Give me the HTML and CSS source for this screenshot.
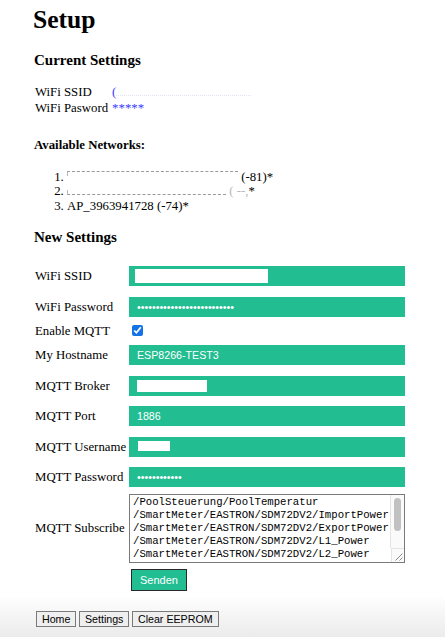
FILE: index.html
```html
<!DOCTYPE html>
<html lang="de">
<head>
<meta charset="utf-8">
<title>Setup</title>
<link rel="stylesheet" href="styles.css">
</head>
<body>
<main class="page">
  <h1 class="title">Setup</h1>
  <h3 class="section">Current Settings</h3>
  <table class="current">
    <tr><td class="k">WiFi SSID</td><td class="v"><span class="blue">(</span><span class="redact-dots"></span></td></tr>
    <tr><td class="k">WiFi Pasword</td><td class="v blue">*****</td></tr>
  </table>
  <h4 class="sub">Available Networks:</h4>
  <ol class="networks">
    <li><span class="redact redact-top"></span> (-81)*</li>
    <li><span class="redact redact-bottom"></span><span class="faint"> ( --,</span>*</li>
    <li>AP_3963941728 (-74)*</li>
  </ol>
  <h3 class="section section-new">New Settings</h3>
  <form class="settings" onsubmit="return false">
    <label class="lbl" for="ssid">WiFi SSID</label>
    <input class="field mask-ssid" id="ssid" type="text" value="">
    <label class="lbl" for="pw">WiFi Password</label>
    <input class="field" id="pw" type="password" value="abcdefghijklmnopqrstuvwxyz">
    <label class="lbl lbl-check" for="mqtt">Enable MQTT</label>
    <div class="check-cell"><input class="check" id="mqtt" type="checkbox" checked></div>
    <label class="lbl" for="host">My Hostname</label>
    <input class="field" id="host" type="text" value="ESP8266-TEST3">
    <label class="lbl" for="broker">MQTT Broker</label>
    <input class="field mask-broker" id="broker" type="text" value="">
    <label class="lbl" for="port">MQTT Port</label>
    <input class="field" id="port" type="text" value="1886">
    <label class="lbl" for="user">MQTT Username</label>
    <input class="field mask-user" id="user" type="text" value="">
    <label class="lbl" for="mpw">MQTT Password</label>
    <input class="field" id="mpw" type="password" value="abcdefghijkl">
    <label class="lbl lbl-area" for="sub">MQTT Subscribe</label>
    <div class="area-wrap">
      <textarea class="area" id="sub" spellcheck="false">/PoolSteuerung/PoolTemperatur
/SmartMeter/EASTRON/SDM72DV2/ImportPower
/SmartMeter/EASTRON/SDM72DV2/ExportPower
/SmartMeter/EASTRON/SDM72DV2/L1_Power
/SmartMeter/EASTRON/SDM72DV2/L2_Power
/SmartMeter/EASTRON/SDM72DV2/L3_Power
/SmartMeter/EASTRON/SDM72DV2/TotalPower</textarea>
      <div class="sb-track"><div class="sb-thumb"></div></div>
      <div class="sb-corner">
        <svg width="12" height="13" viewBox="0 0 12 13"><path d="M10.5 4.5 L3.5 11.5 M10.5 8.5 L7.5 11.5" stroke="#8a8a8a" stroke-width="1" fill="none"/></svg>
      </div>
    </div>
    <span class="spacer"></span>
    <div class="submit-cell"><button class="send" type="submit">Senden</button></div>
  </form>
</main>
<footer class="nav">
  <button class="navbtn" type="button">Home</button>
  <button class="navbtn" type="button">Settings</button>
  <button class="navbtn" type="button">Clear EEPROM</button>
</footer>
</body>
</html>
```

FILE: styles.css
```css
html, body {
  margin: 0;
  padding: 0;
}

body {
  display: flex;
  flex-direction: column;
  min-height: 100vh;
  font-family: "Liberation Serif", "Times New Roman", serif;
  font-size: 12.8px;
  color: #000;
  background: #fff;
}

.page {
  padding: 0 40px 0 35px;
}

.title {
  font-size: 25.6px;
  line-height: 29px;
  font-weight: bold;
  margin: 5px 0 0 -2px;
}

.section {
  font-size: 15px;
  line-height: 17px;
  font-weight: bold;
  margin: 18px 0 0 -1px;
}

.current {
  border-collapse: collapse;
  margin-top: 14.5px;
  line-height: 16.5px;
}

.current td {
  padding: 0;
  vertical-align: baseline;
}

.current .k {
  padding-right: 4px;
}

.blue {
  color: #3a3aff;
}

.redact-dots {
  display: inline-block;
  width: 135px;
  height: 9px;
  border-bottom: 1px dotted #e2e2f4;
}

.sub {
  font-size: 12.8px;
  line-height: 15px;
  font-weight: bold;
  margin: 21px 0 0 -1px;
}

.networks {
  margin: 17px 0 0;
  padding-left: 32px;
  line-height: 14.7px;
}

.redact {
  display: inline-block;
  width: 170px;
  height: 9px;
}

.redact-top {
  border-top: 1px dashed #9a9a9a;
  border-left: 1px solid #b8b8b8;
  height: 4px;
  vertical-align: 5px;
}

.redact-bottom {
  width: 158px;
  height: 4px;
  border-bottom: 1px dashed #9a9a9a;
  border-left: 1px solid #b8b8b8;
}

.faint {
  color: #b8b8b8;
}

.section-new {
  margin-top: 15px;
}

.settings {
  display: grid;
  grid-template-columns: 94px 276px;
  align-items: center;
  margin-top: 15.5px;
}

.lbl {
  line-height: 14.7px;
  white-space: nowrap;
}

.field {
  box-sizing: border-box;
  width: 276px;
  height: 20px;
  margin: 5px 0 5.5px;
  padding: 0 8px;
  border: none;
  outline: none;
  background: #23bd92;
  color: #fff;
  font-family: "Liberation Sans", Arial, sans-serif;
  font-size: 10.67px;
}

.mask-ssid {
  background: linear-gradient(#fff, #fff) no-repeat 6px 3px / 133px 14px, #23bd92;
}

.mask-broker {
  background: linear-gradient(#fff, #fff) no-repeat 8px 4px / 70px 12px, #23bd92;
}

.mask-user {
  background: linear-gradient(#fff, #fff) no-repeat 9px 4px / 32px 10px, #23bd92;
}

.check-cell {
  height: 18px;
  display: flex;
  align-items: center;
}

.check {
  width: 11px;
  height: 11px;
  margin: 0 0 2px 3px;
  accent-color: #1473e6;
}

.area-wrap {
  position: relative;
  width: 276px;
  height: 69px;
  margin-top: 1.5px;
}

.area {
  display: block;
  box-sizing: border-box;
  width: 276px;
  height: 69px;
  margin: 0;
  padding: 1px 16px 1px 3px;
  border: 1px solid #7a7a7a;
  font-family: "Liberation Mono", "Courier New", monospace;
  font-size: 10.67px;
  line-height: 13px;
  color: #000;
  background: #fff;
  white-space: pre;
  overflow: hidden;
  resize: none;
  outline: none;
}

.sb-track {
  position: absolute;
  top: 1px;
  right: 1px;
  width: 13px;
  height: 53px;
  background: #fafafa;
  border-left: 1px solid #e4e4e4;
}

.sb-thumb {
  margin: 3px 0 0 3px;
  width: 7px;
  height: 33px;
  border-radius: 4px;
  background: #c1c1c1;
}

.sb-corner {
  position: absolute;
  right: 1px;
  bottom: 1px;
  width: 13px;
  height: 14px;
  box-sizing: border-box;
  background: #fafafa;
  border-left: 1px solid #e4e4e4;
  border-top: 1px solid #e4e4e4;
}

.sb-corner svg {
  display: block;
}

.submit-cell {
  padding: 6px 0 0 2px;
}

.send {
  box-sizing: border-box;
  height: 22px;
  padding: 0 8px;
  border: 1px solid #2a2a2a;
  background: #23bd92;
  color: #fff;
  font-family: "Liberation Sans", Arial, sans-serif;
  font-size: 11px;
}

.nav {
  margin-top: auto;
  height: 42px;
  box-sizing: border-box;
  padding: 16px 0 0 36px;
  display: flex;
  align-items: flex-start;
  gap: 2.5px;
  background: linear-gradient(#ffffff, #ebebeb);
}

.navbtn {
  box-sizing: border-box;
  height: 16px;
  padding: 0 5px;
  border: 1px solid #7a7a7a;
  border-radius: 0;
  background: #efefef;
  color: #000;
  font-family: "Liberation Sans", Arial, sans-serif;
  font-size: 10.67px;
  line-height: 12px;
}
```
